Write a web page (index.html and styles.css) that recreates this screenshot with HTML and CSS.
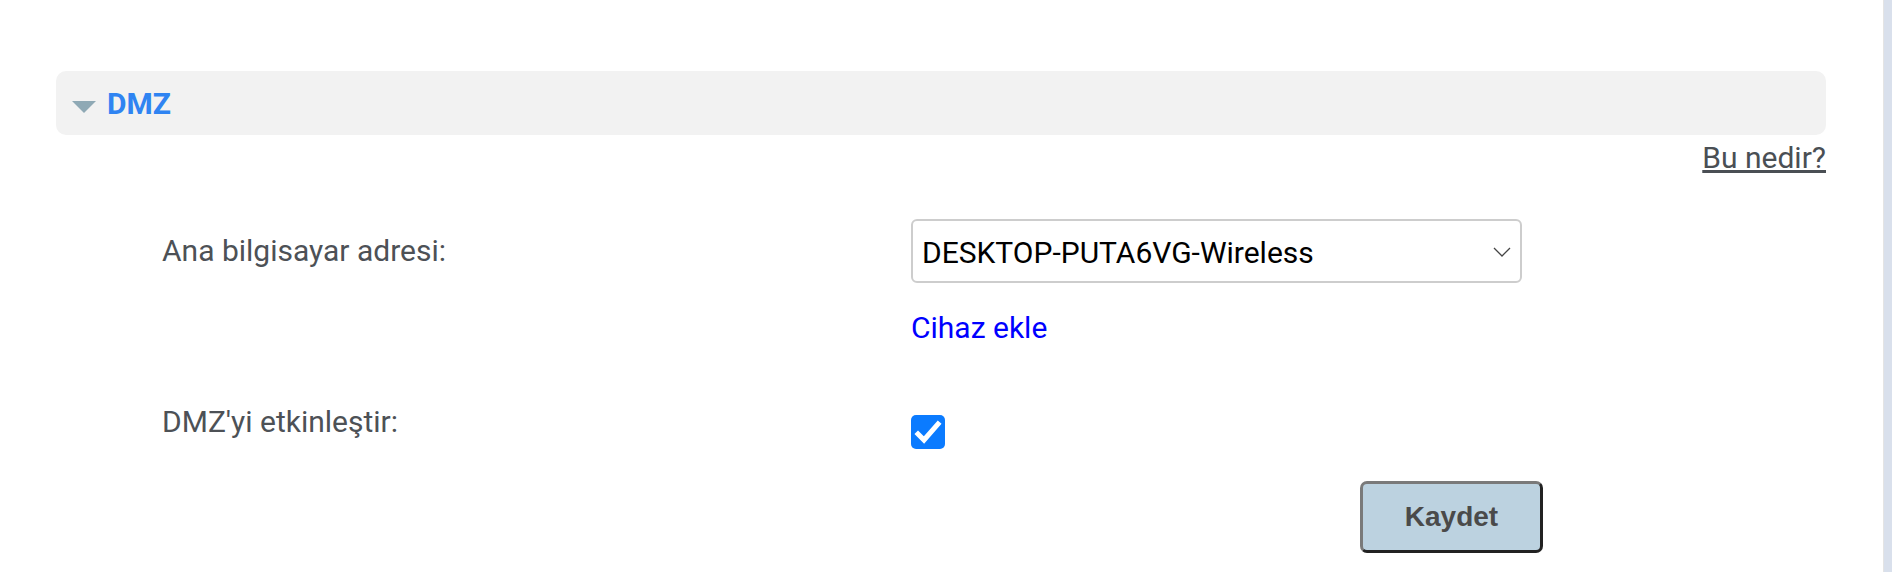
FILE: index.html
```html
<!doctype html>
<html>
	<head>
		<meta charset="utf-8" />
		<title>DMZ</title>
		<link rel="stylesheet" href="styles.css">
	</head>
	<body>
		<div class="page">
			<div class="content">
				<div class="panel-head">
					<span class="caret"></span>
					<span class="panel-title">DMZ</span>
				</div>
				<div class="help-row">
					<a class="help-link" href="#">Bu nedir?</a>
				</div>
				<div class="form-grid">
					<label class="field-label first">Ana bilgisayar adresi:</label>
					<div class="field-control first">
						<div class="select-wrap">
							<select class="host-select">
								<option>DESKTOP-PUTA6VG-Wireless</option>
							</select>
							<svg class="select-arrow" width="18" height="10" viewBox="0 0 18 10">
								<polyline points="1,1 9,9 17,1" fill="none" stroke="#444" stroke-width="1.3" />
							</svg>
						</div>
						<a class="add-link" href="#">Cihaz ekle</a>
					</div>
					<label class="field-label second">DMZ'yi etkinleştir:</label>
					<div class="field-control second">
						<span class="check-box">
							<svg width="34" height="34" viewBox="0 0 34 34">
								<polyline points="7,19 13,25 27,9" fill="none" stroke="#fff" stroke-width="5" stroke-linecap="square" />
							</svg>
						</span>
					</div>
					<div></div>
					<div class="actions">
						<button class="save-btn" type="button">Kaydet</button>
					</div>
				</div>
			</div>
			<div class="scroll-strip"></div>
		</div>
	</body>
</html>
```

FILE: styles.css
```css
body {
	margin : 0;
	background : #fff;
	font-family : Roboto, "Noto Sans", sans-serif;
}
.page {
	display : flex;
	height : 572px;
	overflow : hidden;
}
.content {
	flex : 1;
	padding : 71px 57px 0 56px;
}
.scroll-strip {
	flex : 0 0 9px;
	box-sizing : border-box;
	background : #d9e0ec;
	border-left : 1px solid #e4e4e4;
}
.panel-head {
	display : flex;
	align-items : center;
	height : 64px;
	padding-left : 16px;
	background : #f2f2f2;
	border-radius : 10px;
}
.caret {
	width : 0;
	height : 0;
	margin-top : 8px;
	border-left : 12px solid transparent;
	border-right : 12px solid transparent;
	border-top : 12px solid #8fa9b5;
}
.panel-title {
	margin-left : 11px;
	font-size : 30px;
	font-weight : 700;
	line-height : 35px;
	color : #2f84f2;
}
.help-row {
	margin-top : 5px;
	text-align : right;
	line-height : 35px;
}
.help-link {
	font-size : 30px;
	color : #4a4f54;
	text-decoration : underline;
}
.form-grid {
	display : grid;
	grid-template-columns : 749px 1fr;
	padding-left : 106px;
}
.field-label {
	font-size : 30px;
	line-height : 35px;
	color : #4d5156;
}
.field-label.first {
	margin-top : 53px;
}
.field-control.first {
	margin-top : 39px;
}
.field-label.second {
	margin-top : 59px;
}
.field-control.second {
	margin-top : 70px;
}
.select-wrap {
	position : relative;
	box-sizing : border-box;
	width : 611px;
	height : 64px;
	border : 2px solid #cdcdcd;
	border-radius : 6px;
}
.host-select {
	appearance : none;
	-webkit-appearance : none;
	width : 100%;
	height : 100%;
	padding : 3px 0 0 9px;
	border : none;
	background : transparent;
	font-family : Roboto, sans-serif;
	font-size : 30px;
	color : #000;
	outline : none;
}
.select-arrow {
	position : absolute;
	right : 9px;
	top : 26px;
	pointer-events : none;
}
.add-link {
	display : block;
	margin-top : 27px;
	font-size : 30px;
	line-height : 35px;
	color : #0000ff;
	text-decoration : none;
}
.check-box {
	display : block;
	width : 34px;
	height : 34px;
	background : #0b7bff;
	border-radius : 5px;
}
.check-box svg {
	display : block;
}
.actions {
	margin-top : 32px;
	padding-left : 449px;
}
.save-btn {
	box-sizing : border-box;
	width : 183px;
	height : 72px;
	background : #bcd2e0;
	border : 3px solid;
	border-color : #7a7a7a #222 #222 #7a7a7a;
	border-radius : 7px;
	font-family : "Liberation Sans", Arial, sans-serif;
	font-size : 28px;
	font-weight : 700;
	color : #4a4a4a;
}
```
